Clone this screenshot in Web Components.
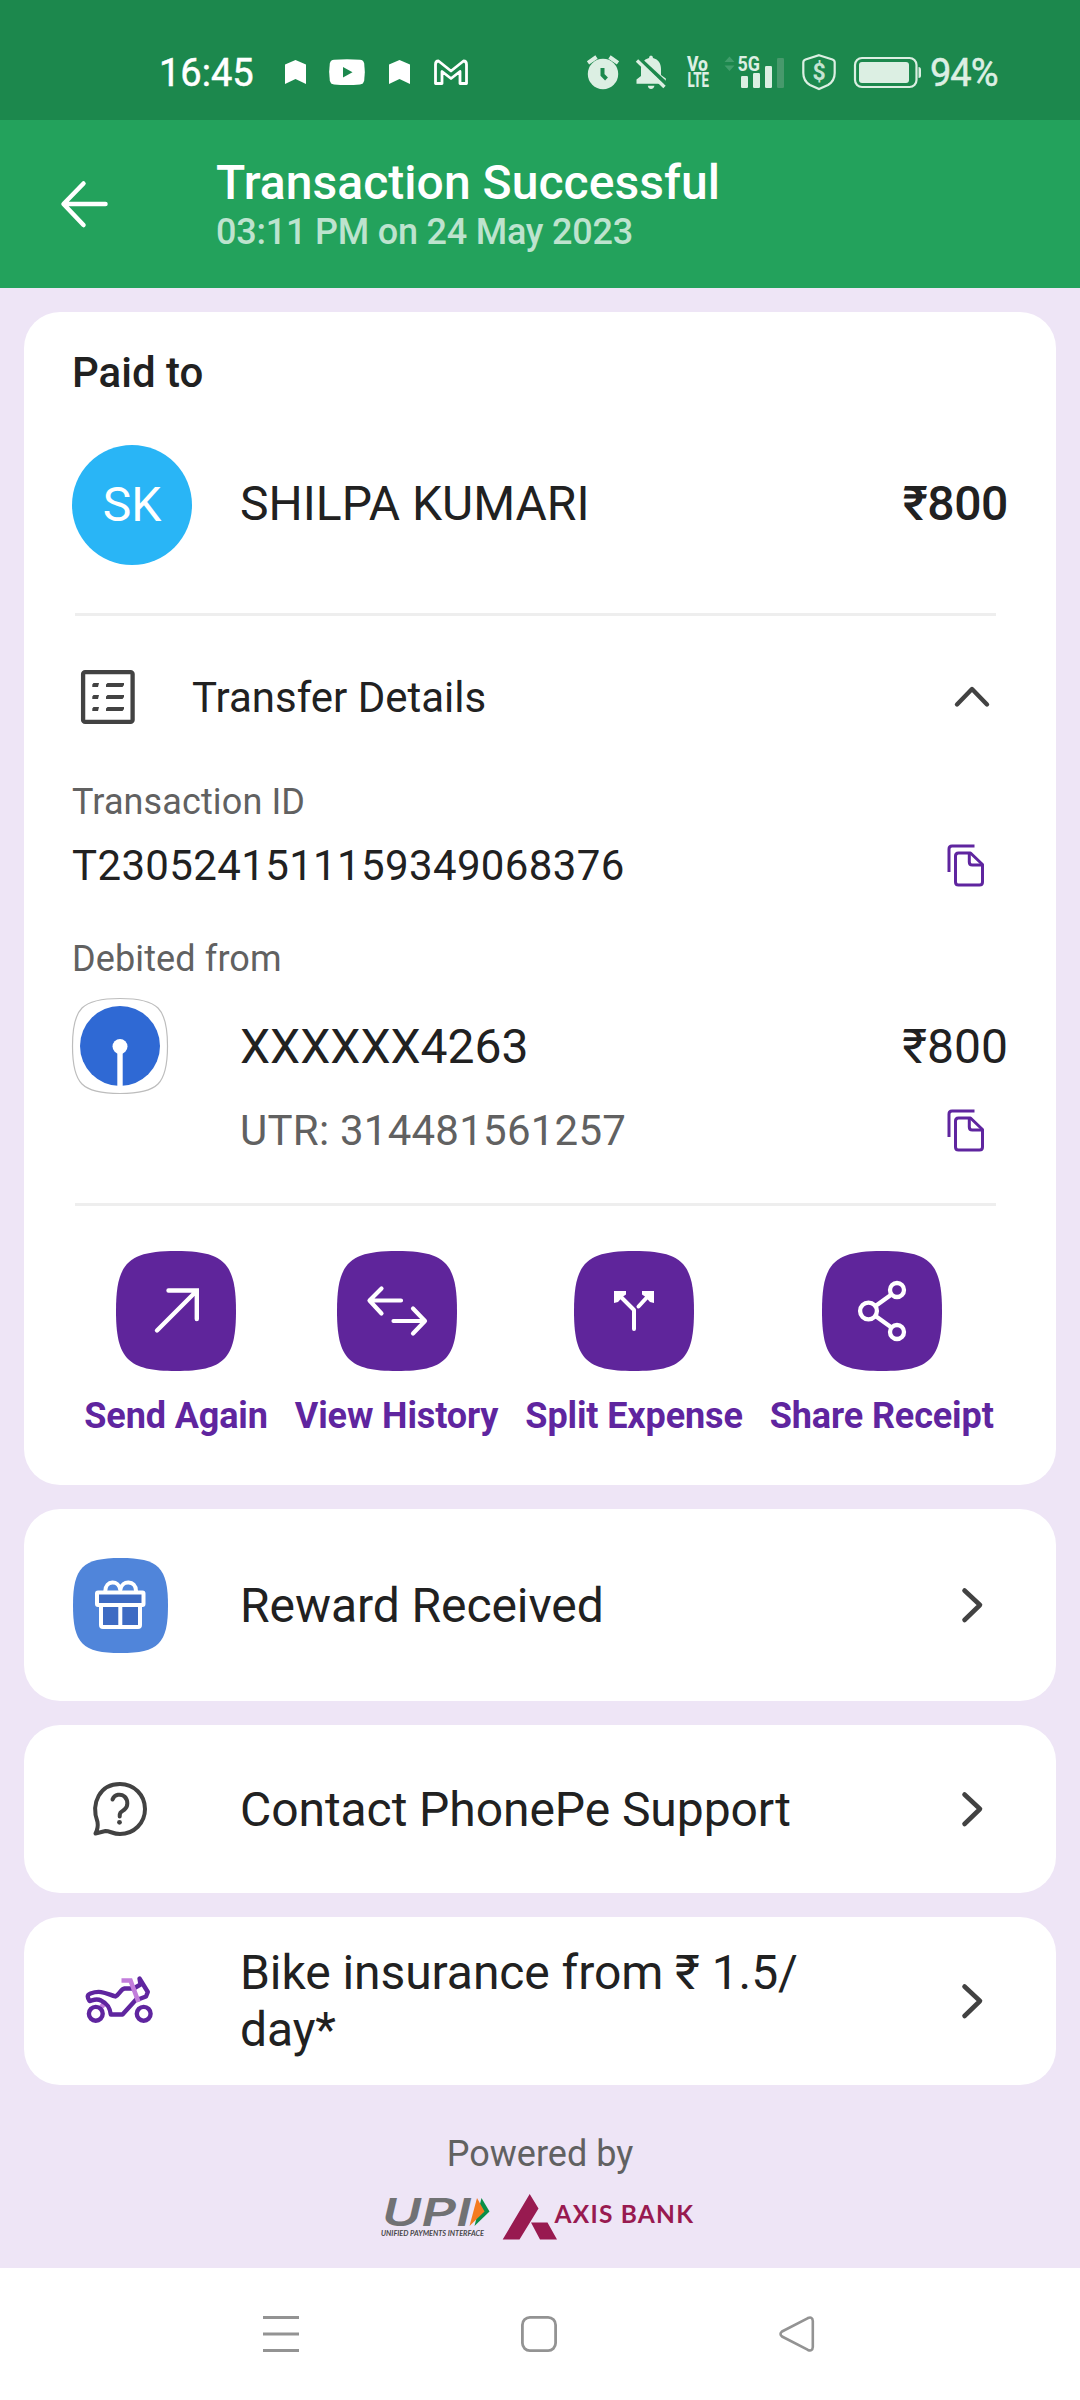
<!DOCTYPE html>
<html lang="en">
<head>
<meta charset="utf-8">
<title>Transaction Successful</title>
<style>
html,body{margin:0;padding:0}
body{width:1080px;height:2400px;overflow:hidden;background:#eee5f6;font-family:Roboto,"Noto Sans",sans-serif;color:#212121}
</style>
</head>
<body>
<payment-screen></payment-screen>
<script>
const define = (name, html, init) => {
  const t = document.createElement('template');
  t.innerHTML = html;
  customElements.define(name, class extends HTMLElement {
    connectedCallback() {
      if (this.shadowRoot) return;
      this.attachShadow({mode: 'open'}).appendChild(t.content.cloneNode(true));
      if (init) init(this, this.shadowRoot);
    }
  });
};

/* Each entry: [viewBox, markup]. */
const G = '#dcefe3';
const SQUIRCLE = 'M60 0C108 0 120 12 120 60S108 120 60 120 0 108 0 60 12 0 60 0Z';
const ICONS = {
  flag: ['285 60 21 24', '<path d="M285 64.5 295.500 60 306 64.500V84L295.500 79 285 84Z" fill="#fff"/>'],
  video: ['329 59 36 26', '<path d="M334 59.700Q347 58.600 360 59.700 363.500 60 364.200 63.500 365.500 72 364.200 80.500 363.500 84 360 84.400 347 85.500 334 84.400 330.500 84 329.800 80.500 328.500 72 329.800 63.500 330.500 60 334 59.700Z" fill="#fff"/><path d="M343 67V77.500L352.500 72.200Z" fill="#1c884d"/>'],
  mail: ['433 58 36 27', '<path d="M435.500 82.500V63.500Q435.500 60 438.500 60L451 70 463.500 60Q466.500 60 466.500 63.500V82.500H460V70.500L451 77.500 442 70.500V82.500Z" fill="none" stroke="#fff" stroke-width="2.800" stroke-linejoin="round"/>'],
  alarm: ['586 54 34 36', `<circle cx="603" cy="74" r="15.200" fill="${G}"/><path d="M588 62.800 596.500 57M618 62.800 609.500 57" stroke="${G}" stroke-width="4"/><path d="M602.500 68V75L606.500 79" fill="none" stroke="#1c884d" stroke-width="4"/>`],
  mute: ['635 54 33 36', `<path d="M651 55.500Q653 55.500 653 58C658.500 59.500 661 63.500 661 69V75L665.800 78.500V83.800H636.500V79.500L641 76V69C641 63.500 643.500 59.500 649 58Q649 55.500 651 55.500Z" fill="${G}"/><path d="M647.800 85.800H654.500Q653.500 89 651 89T647.800 85.800Z" fill="${G}"/><path d="M639.500 59 667 84.500" stroke="#1c884d" stroke-width="4"/><path d="M637 60.500 664.500 87" stroke="${G}" stroke-width="3.400"/>`],
  volte: ['686 55 24 34', `<g fill="${G}" font-family="Roboto,sans-serif" font-weight="800"><text x="687" y="71" font-size="20" textLength="21" lengthAdjust="spacingAndGlyphs">Vo</text><text x="687.500" y="87" font-size="20" textLength="21.500" lengthAdjust="spacingAndGlyphs">LTE</text></g>`],
  signal: ['723 53 62 36', `<path d="M724.500 61 729.500 55.500 734.500 61ZM724.500 64.500 729.500 70 734.500 64.500Z" fill="#409d6b"/><text x="737.500" y="70" font-size="21" font-weight="700" font-family="Roboto,sans-serif" fill="${G}" textLength="22.500" lengthAdjust="spacingAndGlyphs">5G</text><g fill="${G}"><rect x="741" y="75" width="7" height="12" rx="1.200"/><rect x="753" y="72" width="7" height="15" rx="1.200"/><rect x="765" y="65" width="7" height="22" rx="1.200"/></g><rect x="777" y="57" width="7" height="30" rx="1.200" fill="#47996c"/>`],
  shield: ['801 53 36 38', `<path d="M819 55.200 832.500 59.500Q834.700 60.300 834.700 62.500V73Q834.700 81 828 85L819 89 810 85Q803.300 81 803.300 73V62.500Q803.300 60.300 805.500 59.500Z" fill="none" stroke="${G}" stroke-width="2.200"/><text x="819" y="79.800" text-anchor="middle" font-size="23" font-weight="700" font-family="Roboto,sans-serif" fill="#c5e4d2">$</text>`],
  battery: ['853 56 69 33', `<rect x="855" y="58" width="61.500" height="29" rx="7" fill="none" stroke="${G}" stroke-width="2.200"/><rect x="859" y="62" width="50" height="21" rx="3" fill="${G}"/><path d="M918.500 67Q921 67 921 70V75.500Q921 78 918.500 78Z" fill="${G}"/>`],
  back: ['58 178 54 52', '<path d="M105.500 204H64M83.500 183.500 63.500 204 83.500 225" fill="none" stroke="#fff" stroke-width="4.500" stroke-linecap="round" stroke-linejoin="round"/>'],
  list: ['81 670 54 54', '<rect x="83.100" y="672.100" width="49.500" height="49.800" rx="2" fill="none" stroke="#424242" stroke-width="4.300"/><path d="M93.500 683H99L98 687H92.300V684.500ZM93.500 695H99L98 699H92.300V696.500ZM93.500 707H99L98 711H92.300V708.500ZM107.500 683H124V685L122.500 687H106V684.500ZM107.500 695H124V697L122.500 699H106V696.500ZM107.500 707H124V709L122.500 711H106V708.500Z" fill="#424242"/>'],
  up: ['954 686 36 22', '<path d="M957 704.500 972 689 987 704.500" fill="none" stroke="#424242" stroke-width="4.400" stroke-linecap="round" stroke-linejoin="round"/>'],
  right: ['960 1983 24 36', '<path d="M964.500 1986.500 980 2001 964.500 2016" fill="none" stroke="#424242" stroke-width="4.600" stroke-linecap="round" stroke-linejoin="round"/>'],
  copy: ['946 845 40 42', '<g fill="none" stroke="#5f259f" stroke-width="3"><path d="M949 872V849Q949 846 952 846H974.500"/><path d="M958.500 853H970.500L982.500 864.500V882Q982.500 885 979.500 885H958.500Q955.500 885 955.500 882V856Q955.500 853 958.500 853Z" stroke-linejoin="round"/><path d="M969.300 853V862Q969.300 865 972.300 865H982.500"/></g>'],
  bank: ['72 998 96 96', '<path transform="translate(72.500 998.500) scale(.7917)" d="'+SQUIRCLE+'" fill="#fff" stroke="#bdbdbd" stroke-width="1.500"/><circle cx="120" cy="1046" r="40" fill="#2f69d4"/><circle cx="120" cy="1046.500" r="7.500" fill="#fff"/><path d="M117.300 1046H122.700V1087H117.300Z" fill="#fff"/>'],
  send: ['117 1251 120 120', '<path d="M158 1330.500 197.500 1291M169.500 1290.500H197.800V1319" fill="none" stroke="#fff" stroke-width="4.400" stroke-linecap="round"/>'],
  history: ['337 1251 120 120', '<path d="M401 1300.500H370M381.500 1288.500 369.500 1300.500 381.500 1313.500M393.500 1321H425M413 1308.500 425 1321 413 1333.500" fill="none" stroke="#fff" stroke-width="4.200" stroke-linecap="round" stroke-linejoin="round"/>'],
  split: ['575 1251 120 120', '<path d="M635 1329V1310L619 1294M639.500 1306.500 651 1294" fill="none" stroke="#fff" stroke-width="4" stroke-linecap="round" stroke-linejoin="round"/><path d="M615 1291H627V1294.500L624 1296.500 619 1302 615 1303ZM655 1291H643V1294.500L646 1296.500 651 1302 655 1303Z" fill="#fff"/>'],
  share: ['822 1251 120 120', '<g fill="none" stroke="#fff" stroke-width="4.300"><circle cx="868.500" cy="1311" r="8.400"/><circle cx="897" cy="1290" r="7"/><circle cx="897" cy="1332" r="7"/><path d="M875.500 1306 891.500 1294.500M875.500 1316 891.500 1327.500"/></g>'],
  gift: ['72 1557 96 96', '<path transform="translate(73 1558) scale(.7917)" d="'+SQUIRCLE+'" fill="#5085da"/><path d="M97.300 1592.500H143.300V1604.500H97.300ZM101 1605H140.500V1626.500H101Z" fill="#3e6bc3"/><g fill="none" stroke="#fff" stroke-width="4" stroke-linejoin="round"><rect x="97" y="1592.500" width="46.500" height="12.500" rx="1"/><path d="M101 1606V1625Q101 1627 103 1627H138Q140 1627 140 1625V1606M120.300 1606V1626M105.300 1591C105.300 1580 119 1579.500 120.300 1590 121.500 1579.500 136 1580 136 1591"/></g>'],
  help: ['72 1761 96 96', '<path d="M97.500 1822C90.500 1803 100 1784 120 1784 134 1784 145 1795 145 1809S134 1834 120 1834C113 1834 110 1831 105.500 1831L95.500 1833.500Q98.500 1828 97.500 1822Z" fill="none" stroke="#424242" stroke-width="4" stroke-linejoin="round"/><path d="M112.500 1799.500C114.500 1794 121 1793.500 124.500 1796.500 128.500 1800.500 128 1807 124.500 1809.500 121 1812 119.700 1812 119.700 1816.500" fill="none" stroke="#424242" stroke-width="4" stroke-linecap="round"/><circle cx="119.500" cy="1822.300" r="2.400" fill="#424242"/>'],
  bike: ['72 1953 96 96', '<path d="M104.500 2003 101.500 2007" stroke="#c27ddb" stroke-width="5"/><g fill="none" stroke="#5f259f" stroke-width="4.400" stroke-linecap="round" stroke-linejoin="round"><circle cx="95.800" cy="2013.800" r="6.900"/><circle cx="143.700" cy="2013.800" r="6.900"/><path d="M134 1988.500H124.500C121 1989 119.500 1994 115.500 1996.500 107 1994 101 1989.500 90.500 1993.500 86.500 1995 87.500 1997.500 89.500 2001 93.500 2000 96.500 1998 101 2000.500 108.500 2004 110 2009 110.800 2014.500H122.500L137 1998.500"/><path d="M138 1999.500 146 1996.500 147.800 1992 139.500 1978.500 140.500 1984.500 134.500 1988"/></g><path d="M121.500 1980.500H130.500L138.500 2002" fill="none" stroke="#c27ddb" stroke-width="4.600"/>'],
  menu: ['263 2315 36 38', '<path d="M263 2317.500H299M263 2334H299M263 2350.500H299" stroke="#939393" stroke-width="3"/>'],
  home: ['520 2315 38 38', '<rect x="522.400" y="2317.400" width="33.200" height="33.200" rx="7.500" fill="none" stroke="#939393" stroke-width="2.800"/>'],
  prev: ['778 2315 38 38', '<path d="M782 2331.500 807.500 2318.300Q812.500 2316 812.800 2321V2347Q812.500 2352 807.500 2349.700L782 2336.500Q779 2334 782 2331.500Z" fill="none" stroke="#939393" stroke-width="2.600" stroke-linejoin="round"/>'],
  logos: ['375 2190 330 54', '<text x="382" y="2226" font-family="Inter,sans-serif" font-style="italic" font-weight="600" font-size="38.500" fill="#717274" textLength="89" lengthAdjust="spacingAndGlyphs">UPI</text><path d="M481.500 2198 489.500 2211.500 474.500 2226Z" fill="#0a8f48"/><path d="M477 2198 484.500 2211.500 469.500 2226Z" fill="#f47b20"/><text x="381" y="2235.800" font-family="Lato,sans-serif" font-style="italic" font-weight="700" font-size="8" fill="#48484a" textLength="103" lengthAdjust="spacingAndGlyphs">UNIFIED PAYMENTS INTERFACE</text><path d="M529.700 2194 538.500 2208.500 519.500 2239.500H502.700ZM531 2222.500H547.500L557 2239.500H540Z" fill="#981a50"/><text x="554.500" y="2223.200" font-family="Lato,sans-serif" font-weight="700" font-size="24.500" fill="#981a50" textLength="138.500">AXIS BANK</text>']
};

define('ui-icon', '<style>:host{display:block;flex:none}svg{display:block;overflow:visible}</style><svg></svg>', (el, root) => {
  const [box, body] = ICONS[el.getAttribute('name')];
  const [, , w, h] = box.split(' ');
  const svg = root.querySelector('svg');
  svg.setAttribute('viewBox', box);
  svg.setAttribute('width', w);
  svg.setAttribute('height', h);
  svg.innerHTML = body;
});

define('status-bar', `<style>
:host{display:flex;align-items:center;height:120px;box-sizing:border-box;padding:24px 82px 0 159px;background:#1c884d;color:#fff}
.time,.pct{font-size:38px;line-height:44px;white-space:nowrap;padding-top:2px;-webkit-text-stroke:.5px currentColor}
.time{width:96px}
.pct{margin-left:8px;width:68px;color:#dcefe3;letter-spacing:-1px}
.spacer{flex:1}
</style>
<span class="time">16:45</span>
<ui-icon name="flag" style="margin-left:30px"></ui-icon>
<ui-icon name="video" style="margin-left:23px"></ui-icon>
<ui-icon name="flag" style="margin-left:24px"></ui-icon>
<ui-icon name="mail" style="margin-left:23px"></ui-icon>
<span class="spacer"></span>
<ui-icon name="alarm"></ui-icon>
<ui-icon name="mute" style="margin-left:15px"></ui-icon>
<ui-icon name="volte" style="margin-left:18px"></ui-icon>
<ui-icon name="signal" style="margin-left:13px"></ui-icon>
<ui-icon name="shield" style="margin-left:16px"></ui-icon>
<ui-icon name="battery" style="margin-left:16px"></ui-icon>
<span class="pct">94%</span>`);

define('app-header', `<style>
:host{display:flex;align-items:center;height:168px;box-sizing:border-box;padding-left:58px;gap:104px;background:#23a25c;color:#fff}
.t{font-size:48px;line-height:56px;font-weight:500;letter-spacing:.05px}
.s{font-size:36px;line-height:42px;font-weight:500;color:#bde3ce;letter-spacing:-.22px}
</style>
<ui-icon name="back"></ui-icon>
<div><div class="t"><slot name="title"></slot></div><div class="s"><slot></slot></div></div>`);

define('ui-card', `<style>
:host{display:block;box-sizing:border-box;background:#fff;border-radius:36px}
</style><slot></slot>`);

define('ui-divider', '<style>:host{display:block;height:3px;margin:0 12px 0 3px;background:#eee}</style>');

define('action-button', `<style>
:host{display:flex;flex-direction:column;align-items:center;gap:24px}
.tile{display:grid;width:120px;height:120px}
.tile>*{grid-area:1/1}
.label{font-size:36px;line-height:42px;font-weight:700;color:#5f259f;white-space:nowrap;letter-spacing:-.12px}
</style>
<div class="tile"><svg width="120" height="120"><path d="${SQUIRCLE}" fill="#5f259b"/></svg></div>
<div class="label"><slot></slot></div>`, (el, root) => {
  const icon = document.createElement('ui-icon');
  icon.setAttribute('name', el.getAttribute('icon'));
  root.querySelector('.tile').appendChild(icon);
});

define('link-row', `<style>
:host{display:flex;align-items:center;height:var(--h,168px);box-sizing:border-box;padding:0 72px 0 48px}
.text{flex:1;margin-left:72px;font-size:48px;line-height:57px;letter-spacing:-.07px}
</style>
<slot name="icon"></slot><div class="text"><slot></slot></div><ui-icon name="right"></ui-icon>`);

define('transfer-card', `<style>
:host{display:block}
ui-card{padding:36px 48px 48px;height:1173px}
.row{display:flex;align-items:center}
.grow{flex:1}
.big{font-size:48px;line-height:56px}
.mid{font-size:42px;line-height:50px}
.sub{font-size:36px;line-height:42px;color:#616161;letter-spacing:.12px}
.medium{font-weight:500}
.avatar{display:flex;align-items:center;justify-content:center;width:120px;height:120px;border-radius:50%;background:#29b5f6;color:#fff;margin-right:48px}
.up{padding-bottom:2px}
.down{padding-top:2px}
.actions{display:flex;justify-content:center;gap:27px;margin:45px 2px 0 0}
</style>
<ui-card>
  <div class="mid medium">Paid to</div>
  <div class="row" style="margin-top:47px">
    <div class="avatar big">SK</div>
    <div class="big grow up">SHILPA KUMARI</div>
    <div class="big medium up" style="letter-spacing:-.4px">₹800</div>
  </div>
  <ui-divider style="margin-top:48px"></ui-divider>
  <div class="row" style="margin-top:45px;height:72px;padding:0 18px 0 9px">
    <ui-icon name="list"></ui-icon>
    <div class="mid grow down" style="margin-left:57px">Transfer Details</div>
    <ui-icon name="up"></ui-icon>
  </div>
  <div class="sub" style="margin-top:48px">Transaction ID</div>
  <div class="row" style="margin-top:18px;padding-right:22px">
    <div class="mid grow" style="letter-spacing:.36px">T2305241511159349068376</div>
    <ui-icon name="copy"></ui-icon>
  </div>
  <div class="sub" style="margin-top:47px">Debited from</div>
  <div class="row" style="margin-top:18px">
    <ui-icon name="bank"></ui-icon>
    <div class="big grow down" style="margin-left:72px">XXXXXX4263</div>
    <div class="big down">₹800</div>
  </div>
  <div class="row" style="margin-top:12px;padding:0 22px 0 168px">
    <div class="mid grow" style="color:#616161;letter-spacing:.24px">UTR: 314481561257</div>
    <ui-icon name="copy"></ui-icon>
  </div>
  <ui-divider style="margin-top:47px"></ui-divider>
  <div class="actions">
    <action-button icon="send">Send Again</action-button>
    <action-button icon="history">View History</action-button>
    <action-button icon="split">Split Expense</action-button>
    <action-button icon="share">Share Receipt</action-button>
  </div>
</ui-card>`);

define('powered-by', `<style>
:host{display:flex;flex-direction:column;align-items:center;padding-top:24px;gap:15px}
.p{font-size:36px;line-height:42px;color:#616161}
</style>
<div class="p">Powered by</div><ui-icon name="logos"></ui-icon>`);

define('nav-bar', `<style>
:host{display:flex;align-items:center;justify-content:space-between;height:132px;box-sizing:border-box;padding:0 264px 0 263px;background:#fff}
</style>
<ui-icon name="menu"></ui-icon><ui-icon name="home"></ui-icon><ui-icon name="prev"></ui-icon>`);

define('payment-screen', `<style>
:host{display:flex;flex-direction:column;width:1080px;height:2400px;background:#eee5f6}
main{flex:1;display:flex;flex-direction:column;gap:24px;padding:24px 24px 0}
</style>
<status-bar></status-bar>
<app-header><span slot="title">Transaction Successful</span>03:11 PM on 24 May 2023</app-header>
<main>
  <transfer-card></transfer-card>
  <ui-card><link-row style="--h:192px"><ui-icon slot="icon" name="gift"></ui-icon>Reward Received</link-row></ui-card>
  <ui-card><link-row><ui-icon slot="icon" name="help"></ui-icon>Contact PhonePe Support</link-row></ui-card>
  <ui-card><link-row><ui-icon slot="icon" name="bike"></ui-icon>Bike insurance from ₹ 1.5/<br>day*</link-row></ui-card>
  <powered-by></powered-by>
</main>
<nav-bar></nav-bar>`);
</script>
</body>
</html>
